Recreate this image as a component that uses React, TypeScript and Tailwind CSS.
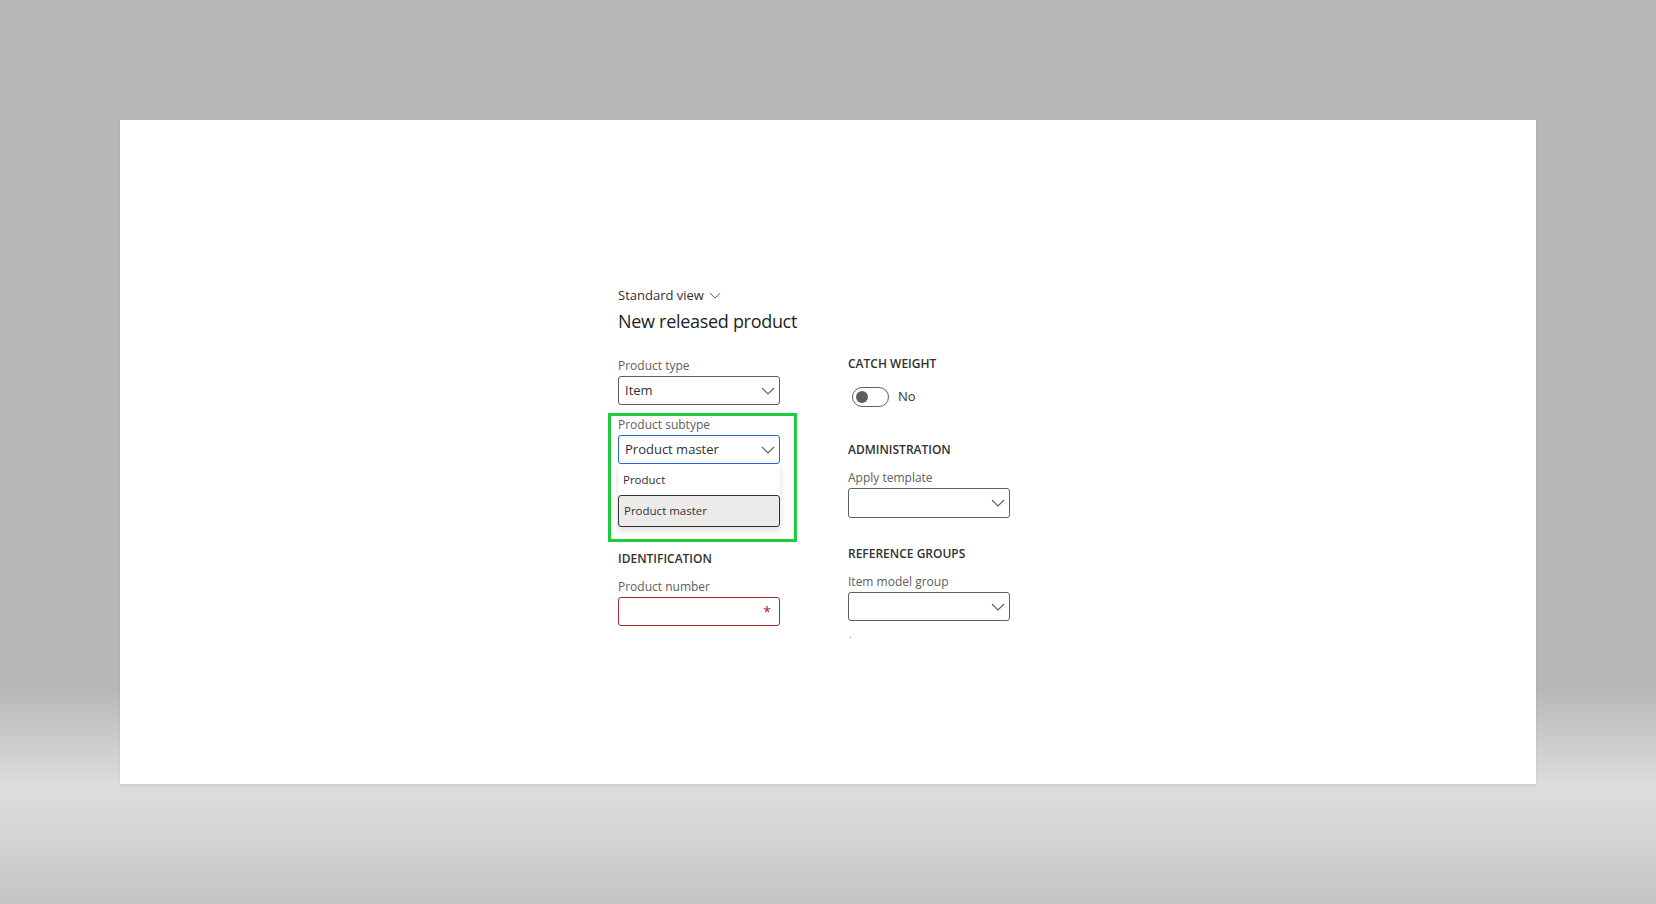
import type { ReactNode } from "react";

function Chevron({ className = "" }: { className?: string }) {
  return (
    <svg className={className} width="14" height="8" viewBox="0 0 14 8" fill="none">
      <path d="M1 1l6 6 6-6" stroke="#605e5c" strokeWidth="1.1" />
    </svg>
  );
}

function Label({ children, className = "" }: { children: ReactNode; className?: string }) {
  return <div className={`text-[12px] leading-[16px] text-[#605e5c] ${className}`}>{children}</div>;
}

function Header({ children, className = "" }: { children: ReactNode; className?: string }) {
  return (
    <div className={`text-[12px] font-semibold uppercase leading-[16px] text-[#323130] ${className}`}>
      {children}
    </div>
  );
}

function Select({ value = "", className = "" }: { value?: string; className?: string }) {
  return (
    <div
      className={`flex h-[29px] w-[162px] items-center justify-between rounded-[3px] border border-[#605e5c] pl-[6px] pr-[4px] text-[13px] text-[#323130] ${className}`}
    >
      <span>{value}</span>
      <Chevron />
    </div>
  );
}

export default function App() {
  return (
    <div className="h-[904px] w-full bg-[linear-gradient(to_bottom,#b6b7b6_0%,#b6b7b6_76%,#dcdddc_87%,#d3d4d3_93%,#c2c3c2_100%)] px-[120px] pt-[120px] font-['Open_Sans',sans-serif]">
      <div className="h-[664px] w-full bg-white pl-[498px] pt-[165px] shadow-[0_2px_3px_rgba(0,0,0,0.08)]">
        <div className="flex items-center gap-[5px] text-[13px] leading-[20px] text-[#323130]">
          Standard view
          <Chevron className="mt-[1px] h-[7px] w-[12px]" />
        </div>
        <div className="mt-[3px] text-[18px] leading-[26px] tracking-[-0.3px] text-[#201f1e]">New released product</div>

        <div className="mt-[6px] flex gap-[68px]">
          <div className="flex w-[162px] flex-col">
            <Label className="mt-[18px]">Product type</Label>
            <Select className="mt-[2px]" value="Item" />

            <div className="-ml-[10px] mt-[8px] w-[189px] border-[3px] border-[#1fcc3e] pb-[12px] pl-[7px] pt-[1px]">
              <Label>Product subtype</Label>
              <div className="mt-[2px] flex h-[29px] w-[162px] items-center justify-between rounded-[3px] border border-[#2266e3] pl-[6px] pr-[4px] text-[13px] text-[#323130]">
                <span>Product master</span>
                <Chevron />
              </div>
              <div className="w-[162px] bg-white shadow-[0_3px_7px_rgba(0,0,0,0.14)]">
                <div className="flex h-[31px] items-center pl-[5px] text-[11.5px] text-[#323130]">Product</div>
                <div className="flex h-[32px] items-center rounded-[3px] border border-[#323130] bg-[#edebe9] pl-[5px] text-[11.5px] text-[#323130]">
                  Product master
                </div>
              </div>
            </div>

            <Header className="mt-[9px]">Identification</Header>
            <Label className="mt-[12px]">Product number</Label>
            <div className="mt-[2px] flex h-[29px] w-[162px] items-center justify-end rounded-[3px] border border-[#a4262c] pr-[8px]">
              <span className="text-[14px] leading-none text-[#a4262c]">*</span>
            </div>
          </div>

          <div className="flex w-[162px] flex-col">
            <Header className="mt-[16px]">Catch weight</Header>
            <div className="ml-[4px] mt-[15px] flex items-center gap-[9px]">
              <div className="flex h-[20px] w-[37px] items-center rounded-full border border-[#605e5c] pl-[3px]">
                <div className="h-[12px] w-[12px] rounded-full bg-[#605e5c]" />
              </div>
              <span className="text-[13px] text-[#323130]">No</span>
            </div>

            <Header className="mt-[35px]">Administration</Header>
            <Label className="mt-[12px]">Apply template</Label>
            <Select className="mt-[2px] h-[30px]" />

            <Header className="mt-[28px]">Reference groups</Header>
            <Label className="mt-[12px]">Item model group</Label>
            <Select className="mt-[2px]" />
            <div className="ml-[2px] mt-[16px] h-[1px] w-[1px] bg-[#8a8886]" />
          </div>
        </div>
      </div>
    </div>
  );
}
